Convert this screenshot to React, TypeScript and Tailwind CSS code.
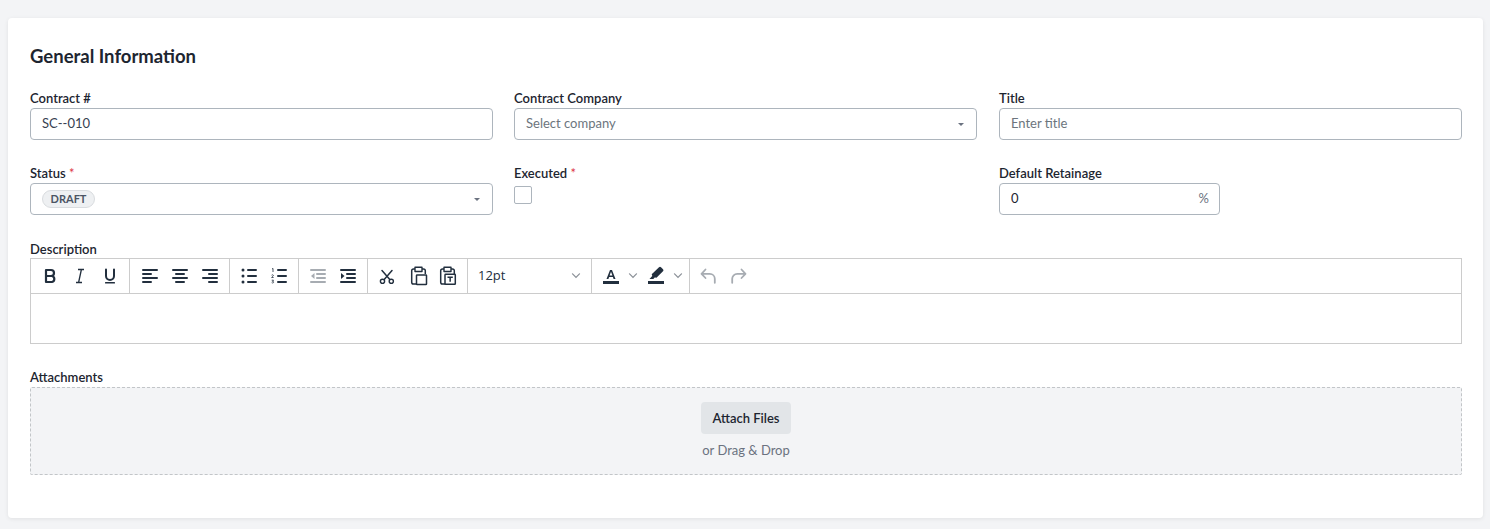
import type { ReactNode } from 'react'

const ALIGN_LEFT = 'M5 5h14a1 1 0 0 1 0 2H5a1 1 0 0 1 0-2zm0 4h8a1 1 0 0 1 0 2H5a1 1 0 0 1 0-2zm0 4h14a1 1 0 0 1 0 2H5a1 1 0 0 1 0-2zm0 4h8a1 1 0 0 1 0 2H5a1 1 0 0 1 0-2z'
const ALIGN_CENTER = 'M5 5h14a1 1 0 0 1 0 2H5a1 1 0 0 1 0-2zm3 4h8a1 1 0 0 1 0 2H8a1 1 0 0 1 0-2zm-3 4h14a1 1 0 0 1 0 2H5a1 1 0 0 1 0-2zm3 4h8a1 1 0 0 1 0 2H8a1 1 0 0 1 0-2z'
const ALIGN_RIGHT = 'M5 5h14a1 1 0 0 1 0 2H5a1 1 0 0 1 0-2zm6 4h8a1 1 0 0 1 0 2h-8a1 1 0 0 1 0-2zm-6 4h14a1 1 0 0 1 0 2H5a1 1 0 0 1 0-2zm6 4h8a1 1 0 0 1 0 2h-8a1 1 0 0 1 0-2z'
const LIST_LINES = 'M11 5h8a1 1 0 0 1 0 2h-8a1 1 0 0 1 0-2zm0 6h8a1 1 0 0 1 0 2h-8a1 1 0 0 1 0-2zm0 6h8a1 1 0 0 1 0 2h-8a1 1 0 0 1 0-2z'
const INDENT_LINES = 'M5 5h14a1 1 0 0 1 0 2H5a1 1 0 0 1 0-2zm6 4h8a1 1 0 0 1 0 2h-8a1 1 0 0 1 0-2zm0 4h8a1 1 0 0 1 0 2h-8a1 1 0 0 1 0-2zm-6 4h14a1 1 0 0 1 0 2H5a1 1 0 0 1 0-2z'

function Icon({ children, muted }: { children: ReactNode; muted?: boolean }) {
  return (
    <svg width="24" height="24" viewBox="0 0 24 24" className={muted ? 'text-[#a7acb2]' : 'text-[#222f3e]'} fill="currentColor">
      {children}
    </svg>
  )
}

function Btn({ children, wide }: { children: ReactNode; wide?: boolean }) {
  return <div className={`flex h-[34px] items-center justify-center ${wide ? 'w-[31px] pl-[1px]' : 'w-[30px]'}`}>{children}</div>
}

function Group({ children, wide }: { children: ReactNode; wide?: boolean }) {
  return (
    <div className={`flex h-[34px] border-r border-[#cccccc] pr-[4px] ${wide ? 'pl-[5px]' : 'pl-[4px]'}`}>
      {children}
    </div>
  )
}

function Chevron({ className }: { className: string }) {
  return (
    <svg width="10" height="10" viewBox="0 0 10 10" fill="currentColor" className={className}>
      <path d="M5 7.200.900 3.100a.6.6 0 0 1 .8-.8L5 5.600l3.300-3.300a.6.6 0 0 1 .8.8z" />
    </svg>
  )
}

function Label({ text, required, low }: { text: string; required?: boolean; low?: boolean }) {
  return (
    <label className={`block h-[18px] text-[13px] leading-[16px] font-semibold text-[#1d2530] ${low ? 'pt-[1px]' : ''}`}>
      {text}
      {required && <span className="text-[#dc3545] font-normal"> *</span>}
    </label>
  )
}

function Caret() {
  return <span className="border-x-[3px] border-t-[3.5px] border-x-transparent border-t-[#6b7280]" />
}

export default function App() {
  return (
    <div className="min-h-screen bg-[#f3f4f6] pt-[18px] pb-[11px] pl-[8px] pr-[7px] font-['Lato',sans-serif]">
      <div className="h-[500px] rounded-[4px] bg-white pl-[22px] pr-[21px] pt-[24px] shadow-[0_1px_4px_rgba(0,0,0,0.08)]">
        <h2 className="h-[28px] text-[18.5px] leading-[28px] font-bold text-[#1d2530]">General Information</h2>

        {/* Fields */}
        <div className="mt-[20px] grid grid-cols-[463px_463px_464px] gap-x-[21px] gap-y-[25px]">
          <div>
            <Label text="Contract #" />
            <input
              defaultValue="SC--010"
              className="h-[32px] w-full rounded-[4px] border border-[#adb5bd] px-[11px] pb-[2px] text-[13px] text-[#374151] outline-none"
            />
          </div>
          <div>
            <Label text="Contract Company" />
            <div className="flex h-[32px] items-center justify-between rounded-[4px] border border-[#adb5bd] pl-[11px] pr-[12px] text-[13px] text-[#6c757d]">
              <span className="pb-[1px]">Select company</span>
              <Caret />
            </div>
          </div>
          <div className="ml-[1px]">
            <Label text="Title" />
            <input
              placeholder="Enter title"
              className="h-[32px] w-full rounded-[4px] border border-[#adb5bd] px-[11px] pb-[2px] text-[13px] outline-none placeholder:text-[#6c757d]"
            />
          </div>

          <div>
            <Label text="Status" required />
            <div className="flex h-[32px] items-center justify-between rounded-[4px] border border-[#adb5bd] pl-[11px] pr-[12px]">
              <span className="flex h-[18px] w-[53px] items-center justify-center rounded-full border border-[#d9dcdf] bg-[#eef0f2] text-[11px] font-bold text-[#4b5563]">
                DRAFT
              </span>
              <Caret />
            </div>
          </div>
          <div>
            <Label text="Executed" required />
            <div className="mt-[3px] h-[18px] w-[18px] rounded-[2px] border border-[#adb5bd] bg-white" />
          </div>
          <div className="ml-[1px]">
            <Label text="Default Retainage" />
            <div className="flex h-[32px] w-[221px] items-center justify-between rounded-[4px] border border-[#adb5bd] pl-[11px] pr-[10px] pb-[1px] text-[13px]">
              <span className="text-[#1d2530]">0</span>
              <span className="text-[#6b7280]">%</span>
            </div>
          </div>
        </div>

        {/* Description */}
        <div className="mt-[25px]">
          <Label text="Description" low />
          <div className="h-[86px] border border-[#cccccc]">
            <div className="flex h-[35px] border-b border-[#cccccc]">
              <Group>
                <Btn>
                  <Icon><path d="M8 6h5a3 3 0 0 1 0 6H8zm0 6h6a3.100 3.100 0 0 1 0 6H8z" fill="none" stroke="currentColor" strokeWidth="2.200" strokeLinejoin="round" /></Icon>
                </Btn>
                <Btn>
                  <Icon><path d="M10 5.500h6M8 18.500h6M13.400 5.500l-2.800 13" fill="none" stroke="currentColor" strokeWidth="1.300" /></Icon>
                </Btn>
                <Btn>
                  <Icon><path d="M8 5.500v6.500a4 4 0 0 0 8 0V5.500" fill="none" stroke="currentColor" strokeWidth="2" strokeLinecap="round" /><rect x="7" y="18" width="10" height="1.600" rx=".6" /></Icon>
                </Btn>
              </Group>
              <Group wide>
                <Btn><Icon><path d={ALIGN_LEFT} /></Icon></Btn>
                <Btn><Icon><path d={ALIGN_CENTER} /></Icon></Btn>
                <Btn><Icon><path d={ALIGN_RIGHT} /></Icon></Btn>
              </Group>
              <Group>
                <Btn>
                  <Icon><path d={LIST_LINES} /><circle cx="6" cy="6" r="1.500" /><circle cx="6" cy="12" r="1.500" /><circle cx="6" cy="18" r="1.500" /></Icon>
                </Btn>
                <Btn>
                  <Icon>
                    <path d={LIST_LINES} />
                    <path d="M5 5l1-.6V8M4.600 11.200c.8-.8 2-.4 1.700.5-.2.5-1 1-1.700 1.800h2M4.700 16.200h1.800l-1 1.200c1 0 1.300.4 1.100 1-.2.6-1.200.7-1.900.3" fill="none" stroke="currentColor" strokeWidth=".8" />
                  </Icon>
                </Btn>
              </Group>
              <Group>
                <Btn>
                  <Icon muted><path d={INDENT_LINES} /><path d="M8.500 9v6L5 12z" /></Icon>
                </Btn>
                <Btn>
                  <Icon><path d={INDENT_LINES} /><path d="M5 9v6l3.500-3z" /></Icon>
                </Btn>
              </Group>
              <Group>
                <Btn>
                  <Icon>
                    <path d="M7 6.500l7.800 9M17 6.500l-7.800 9" fill="none" stroke="currentColor" strokeWidth="1.500" strokeLinecap="round" />
                    <circle cx="7.500" cy="17.300" r="2.100" fill="none" stroke="currentColor" strokeWidth="1.400" />
                    <circle cx="16.300" cy="17.300" r="2.100" fill="none" stroke="currentColor" strokeWidth="1.400" />
                  </Icon>
                </Btn>
                <Btn wide>
                  <Icon>
                    <path d="M9 5H7.500A1.800 1.800 0 0 0 5.700 6.800v11.400A1.800 1.800 0 0 0 7.500 20H10M16 5h1.500a1.800 1.800 0 0 1 1.800 1.800V10" fill="none" stroke="currentColor" strokeWidth="1.500" />
                    <path d="M9 3.200h7V7.500H9z" fill="none" stroke="currentColor" strokeWidth="1.400" strokeLinejoin="round" />
                    <rect x="10.500" y="11" width="10" height="9.500" rx=".6" fill="none" stroke="currentColor" strokeWidth="1.500" />
                  </Icon>
                </Btn>
                <Btn>
                  <Icon>
                    <path d="M8 5H6.500A1.800 1.800 0 0 0 4.700 6.800v11.400A1.800 1.800 0 0 0 6.500 20H9M15 5h1.500a1.800 1.800 0 0 1 1.800 1.800V10" fill="none" stroke="currentColor" strokeWidth="1.500" />
                    <path d="M8 3.200h7V7.500H8z" fill="none" stroke="currentColor" strokeWidth="1.400" strokeLinejoin="round" />
                    <rect x="9" y="10.300" width="10.300" height="10" rx=".6" fill="none" stroke="currentColor" strokeWidth="1.500" />
                    <path d="M11.500 12.500h5.300v1.400h-1.900v3.900h-1.500v-3.900h-1.900z" />
                  </Icon>
                </Btn>
              </Group>
              <div className="flex h-[34px] w-[124px] items-center justify-between border-r border-[#cccccc] px-[10px] font-['Open_Sans',sans-serif] text-[#222f3e]">
                <span className="text-[13px]">12pt</span>
                <Chevron className="text-[#8a9097]" />
              </div>
              <div className="flex h-[34px] w-[98px] items-center border-r border-[#cccccc] pl-[7px]">
                <Icon>
                  <path d="M7.500 15L11 6h2l3.500 9h-1.900l-.7-2h-3.800l-.7 2zm3.100-3.500h2.800L12 7.800z" />
                  <rect x="4" y="17" width="16" height="3" />
                </Icon>
                <Chevron className="ml-[5px] text-[#8a9097]" />
                <div className="ml-[6px] flex">
                  <Icon>
                    <path d="M8.500 9.500L15 3.200a1.400 1.400 0 0 1 2 0l2 2a1.400 1.400 0 0 1 0 2L12.700 13.500a1 1 0 0 1-1.300 0l-.4-.2-1.700 1.700H5.500l2.700-3-.1-.8a1 1 0 0 1 .4-1.700z" />
                    <rect x="4" y="17" width="16" height="3" />
                  </Icon>
                </div>
                <Chevron className="ml-[5px] text-[#8a9097]" />
              </div>
              <div className="flex h-[34px] pl-[3px]">
                <Btn>
                  <Icon muted><path d="M9.500 5.500L5.500 9.800 9.500 14M5.800 9.800h8a5 5 0 0 1 5 5v4" fill="none" stroke="currentColor" strokeWidth="1.800" strokeLinecap="round" strokeLinejoin="round" /></Icon>
                </Btn>
                <Btn wide>
                  <Icon muted><path d="M14.500 5.500l4 4.300-4 4.200M18.200 9.800h-8a5 5 0 0 0-5 5v4" fill="none" stroke="currentColor" strokeWidth="1.800" strokeLinecap="round" strokeLinejoin="round" /></Icon>
                </Btn>
              </div>
            </div>
          </div>
        </div>

        {/* Attachments */}
        <div className="mt-[25px]">
          <Label text="Attachments" />
          <div className="flex h-[88px] flex-col items-center rounded-[2px] border border-dashed border-[#c2c5c8] bg-[#f3f4f6] pt-[14px]">
            <button className="h-[32px] w-[90px] rounded-[4px] bg-[#e2e5e8] pt-[1px] text-[13px] font-semibold text-[#1d2530]">
              Attach Files
            </button>
            <div className="mt-[6px] text-[13px] leading-[20px] text-[#6b7280]">or Drag &amp; Drop</div>
          </div>
        </div>
      </div>
    </div>
  )
}
